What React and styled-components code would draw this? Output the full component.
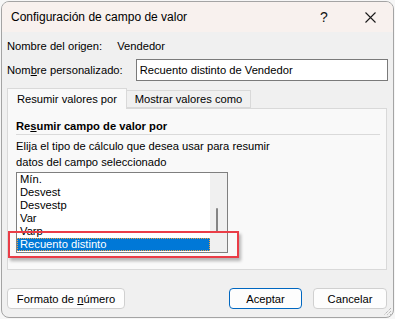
import React from 'react';
import styled, { createGlobalStyle } from 'styled-components';

const Global = createGlobalStyle`
  html, body { margin: 0; padding: 0; background: #f6f6f6; }
  body { font-family: "Liberation Sans", Arial, sans-serif; font-size: 11.2px; color: #000; }
  * { box-sizing: border-box; }
`;

const Desktop = styled.div`
  width: 395px;
  height: 319px;
  overflow: hidden;
  padding: 1px 0 0 1px;
  background: #f6f6f6;
`;

const Window = styled.div`
  width: 393px;
  height: 317px;
  border: 1px solid #a4a4a4;
  border-radius: 8px;
  overflow: hidden;
  background: #f0f0f0;
  display: flex;
  flex-direction: column;
  position: relative;
`;

const TitleBar = styled.div`
  height: 30px;
  flex: none;
  background: #f8f1ee;
  display: flex;
  align-items: center;
  padding-left: 9px;
`;

const Title = styled.div`
  flex: 1;
  font-size: 12px;
`;

const TitleButton = styled.div`
  width: 46px;
  height: 30px;
  display: flex;
  align-items: center;
  justify-content: center;
  font-size: 14px;
  color: #111;
`;

const Body = styled.div`
  flex: 1;
  display: flex;
  flex-direction: column;
  padding: 6px 5px 0 5px;
`;

const InfoRow = styled.div`
  display: flex;
  align-items: center;
  gap: ${p => p.$gap || 0}px;
  height: ${p => p.$h || 16}px;
  margin-top: ${p => p.$mt || 0}px;
  line-height: 16px;
`;

const TextInput = styled.div`
  flex: 1;
  height: 22px;
  border: 1px solid #7a7a7a;
  background: #fff;
  display: flex;
  align-items: center;
  padding-left: 3px;
`;

const TabStrip = styled.div`
  display: flex;
  align-items: flex-end;
  margin-top: 7px;
  height: 20px;
  position: relative;
  z-index: 1;
`;

const Tab = styled.div`
  width: ${p => p.$w}px;
  height: ${p => (p.$active ? 21 : 18)}px;
  margin-bottom: ${p => (p.$active ? -1 : 0)}px;
  display: flex;
  align-items: center;
  justify-content: center;
  white-space: nowrap;
  border: 1px solid #d9d9d9;
  border-bottom: ${p => (p.$active ? 'none' : '1px solid #d9d9d9')};
  border-left: ${p => (p.$active ? '1px solid #d9d9d9' : 'none')};
  background: ${p => (p.$active ? '#f9f9f9' : '#f0f0f0')};
`;

const Panel = styled.div`
  height: 162px;
  margin-right: 1px;
  border: 1px solid #d9d9d9;
  background: #f9f9f9;
  padding: 9px 6px 0 8px;
  display: flex;
  flex-direction: column;
`;

const Heading = styled.div`
  font-weight: bold;
  height: 17px;
  line-height: 16px;
  border-bottom: 1px solid #dadada;
`;

const Para = styled.div`
  margin-top: 3px;
  line-height: 16px;
`;

const ListWrap = styled.div`
  position: relative;
  margin-top: 2px;
  width: 212px;
`;

const ListBox = styled.div`
  width: 212px;
  height: 81px;
  border: 1px solid #7f7f7f;
  background: #fff;
  display: flex;
`;

const Items = styled.div`
  flex: 1;
  overflow: hidden;
`;

const Item = styled.div`
  height: 13px;
  line-height: 13px;
  padding-left: 3px;
  white-space: nowrap;
  background: ${p => (p.$selected ? '#0078d7' : 'transparent')};
  color: ${p => (p.$selected ? '#fff' : '#000')};
  outline: ${p => (p.$selected ? '1px dotted #f5a23c' : 'none')};
  outline-offset: -1px;
`;

const ScrollTrack = styled.div`
  width: 17px;
  background: #f0f0f0;
  position: relative;
`;

const Thumb = styled.div`
  position: absolute;
  left: 6px;
  top: 35px;
  width: 2px;
  height: 25px;
  background: #858585;
  border-radius: 1px;
`;

const Highlight = styled.div`
  position: absolute;
  left: -8px;
  top: 59px;
  width: 231px;
  height: 27px;
  border: 2px solid #ea3d47;
  box-shadow: 2px 3px 3px rgba(0, 0, 0, 0.28);
  pointer-events: none;
`;

const ButtonRow = styled.div`
  display: flex;
  align-items: center;
  margin-top: 18px;
  gap: 11px;
`;

const Button = styled.div`
  width: ${p => p.$w}px;
  height: 21px;
  border: 1px solid ${p => (p.$primary ? '#0067c0' : '#d0d0d0')};
  border-radius: 4px;
  background: #fdfdfd;
  display: flex;
  align-items: center;
  justify-content: center;
  margin-right: ${p => p.$mr || 0}px;
`;

const Spacer = styled.div`
  flex: 1;
`;

const Grip = styled.svg`
  position: absolute;
  right: 1px;
  bottom: 1px;
`;

export default function App() {
  return (
    <Desktop>
      <Global />
      <Window>
        <TitleBar>
          <Title>Configuración de campo de valor</Title>
          <TitleButton>?</TitleButton>
          <TitleButton>
            <svg width="11" height="11" viewBox="0 0 11 11">
              <path d="M0.5 0.5L10.5 10.5M10.5 0.5L0.5 10.5" stroke="#1a1a1a" strokeWidth="1.1" fill="none" />
            </svg>
          </TitleButton>
        </TitleBar>
        <Body>
          <InfoRow $mt={0} $gap={15}>
            <span>Nombre del origen:</span>
            <span>Vendedor</span>
          </InfoRow>
          <InfoRow $mt={5} $h={22} $gap={13}>
            <span>
              Nom<u>b</u>re personalizado:
            </span>
            <TextInput>Recuento distinto de Vendedor</TextInput>
          </InfoRow>
          <TabStrip>
            <Tab $active $w={120}>Resumir valores por</Tab>
            <Tab $w={124}>Mostrar valores como</Tab>
          </TabStrip>
          <Panel>
            <Heading>
              Re<u>s</u>umir campo de valor por
            </Heading>
            <Para>
              Elija el tipo de cálculo que desea usar para resumir
              <br />
              datos del campo seleccionado
            </Para>
            <ListWrap>
              <ListBox>
                <Items>
                  <Item>Mín.</Item>
                  <Item>Desvest</Item>
                  <Item>Desvestp</Item>
                  <Item>Var</Item>
                  <Item>Varp</Item>
                  <Item $selected>Recuento distinto</Item>
                </Items>
                <ScrollTrack>
                  <Thumb />
                </ScrollTrack>
              </ListBox>
              <Highlight />
            </ListWrap>
          </Panel>
          <ButtonRow>
            <Button $w={118}>
              <span>
                Formato de <u>n</u>úmero
              </span>
            </Button>
            <Spacer />
            <Button $w={73} $primary>Aceptar</Button>
            <Button $w={74} $mr={1}>Cancelar</Button>
          </ButtonRow>
        </Body>
        <Grip width="9" height="9" viewBox="0 0 9 9">
          <path d="M8 1L1 8M8 4L4 8M8 7L7 8" stroke="#a0a0a0" strokeWidth="1" strokeDasharray="1 1" />
        </Grip>
      </Window>
    </Desktop>
  );
}
